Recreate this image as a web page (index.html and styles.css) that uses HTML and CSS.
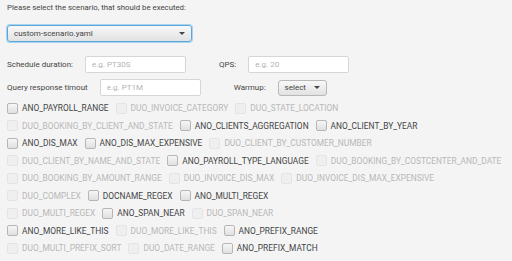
FILE: index.html
```html
<!DOCTYPE html>
<html lang="en">

<head>
    <meta charset="UTF-8">
    <title>Scenario Runner</title>
    <link rel="stylesheet" href="styles.css">
</head>

<body>
    <div class="container">
        <p class="intro">Please select the scenario, that should be executed:</p>

        <div class="combo scenario">
            <span>custom-scenario.yaml</span>
            <span class="arrow"></span>
        </div>

        <div class="form-row first">
            <label>Schedule duration:</label>
            <input type="text" placeholder="e.g. PT30S">
            <label class="lbl-right">QPS:</label>
            <input type="text" placeholder="e.g. 20">
        </div>

        <div class="form-row">
            <label>Query response timout</label>
            <input type="text" placeholder="e.g. PT1M">
            <label class="lbl-right">Warmup:</label>
            <div class="combo warmup">
                <span>select</span>
                <span class="arrow"></span>
            </div>
        </div>

        <div class="queries">
            <div class="query-row">
                <label class="query"><span class="box"></span>ANO_PAYROLL_RANGE</label>
                <label class="query disabled"><span class="box"></span>DUO_INVOICE_CATEGORY</label>
                <label class="query disabled"><span class="box"></span>DUO_STATE_LOCATION</label>
            </div>
            <div class="query-row">
                <label class="query disabled"><span class="box"></span>DUO_BOOKING_BY_CLIENT_AND_STATE</label>
                <label class="query"><span class="box"></span>ANO_CLIENTS_AGGREGATION</label>
                <label class="query"><span class="box"></span>ANO_CLIENT_BY_YEAR</label>
            </div>
            <div class="query-row">
                <label class="query"><span class="box"></span>ANO_DIS_MAX</label>
                <label class="query"><span class="box"></span>ANO_DIS_MAX_EXPENSIVE</label>
                <label class="query disabled"><span class="box"></span>DUO_CLIENT_BY_CUSTOMER_NUMBER</label>
            </div>
            <div class="query-row">
                <label class="query disabled"><span class="box"></span>DUO_CLIENT_BY_NAME_AND_STATE</label>
                <label class="query"><span class="box"></span>ANO_PAYROLL_TYPE_LANGUAGE</label>
                <label class="query disabled"><span class="box"></span>DUO_BOOKING_BY_COSTCENTER_AND_DATE</label>
            </div>
            <div class="query-row">
                <label class="query disabled"><span class="box"></span>DUO_BOOKING_BY_AMOUNT_RANGE</label>
                <label class="query disabled"><span class="box"></span>DUO_INVOICE_DIS_MAX</label>
                <label class="query disabled"><span class="box"></span>DUO_INVOICE_DIS_MAX_EXPENSIVE</label>
            </div>
            <div class="query-row">
                <label class="query disabled"><span class="box"></span>DUO_COMPLEX</label>
                <label class="query"><span class="box"></span>DOCNAME_REGEX</label>
                <label class="query"><span class="box"></span>ANO_MULTI_REGEX</label>
            </div>
            <div class="query-row">
                <label class="query disabled"><span class="box"></span>DUO_MULTI_REGEX</label>
                <label class="query"><span class="box"></span>ANO_SPAN_NEAR</label>
                <label class="query disabled"><span class="box"></span>DUO_SPAN_NEAR</label>
            </div>
            <div class="query-row">
                <label class="query"><span class="box"></span>ANO_MORE_LIKE_THIS</label>
                <label class="query disabled"><span class="box"></span>DUO_MORE_LIKE_THIS</label>
                <label class="query"><span class="box"></span>ANO_PREFIX_RANGE</label>
            </div>
            <div class="query-row">
                <label class="query disabled"><span class="box"></span>DUO_MULTI_PREFIX_SORT</label>
                <label class="query disabled"><span class="box"></span>DUO_DATE_RANGE</label>
                <label class="query"><span class="box"></span>ANO_PREFIX_MATCH</label>
            </div>
        </div>
    </div>
</body>

</html>
```

FILE: styles.css
```css
body {
    font-family: Roboto, "Liberation Sans", sans-serif;
    font-size: 8px;
    background: #f4f4f4;
    color: #444444;
    margin: 0;
}

.container {
    padding: 3px 7px;
}

.intro {
    margin: 0;
    height: 9px;
    line-height: 9px;
    font-size: 7.8px;
}

.combo {
    display: flex;
    align-items: center;
    justify-content: space-between;
    box-sizing: border-box;
    height: 17px;
    padding: 0 6px;
    border: 1px solid #b8b8b8;
    border-radius: 3px;
    background: linear-gradient(#f8f8f8, #e2e2e2);
}

.scenario {
    width: 185px;
    margin-top: 13px;
    border-color: #58a8dc;
    box-shadow: 0 0 0 1px #a9d3ef;
}

.warmup {
    width: 49px;
    height: 16px;
}

.arrow {
    width: 0;
    height: 0;
    border-left: 3px solid transparent;
    border-right: 3px solid transparent;
    border-top: 3px solid #444444;
}

.form-row {
    display: flex;
    align-items: center;
    gap: 12px;
    margin-top: 6px;
}

.form-row.first {
    margin-top: 14px;
}

.form-row label {
    white-space: nowrap;
}

.lbl-right {
    margin-left: 21px;
}

.form-row input {
    box-sizing: border-box;
    width: 101px;
    height: 17px;
    padding: 0 6px;
    border: 1px solid #d6d6d6;
    border-radius: 2px;
    background: #ffffff;
    font-family: inherit;
    font-size: 8px;
}

.form-row input::placeholder {
    color: #b4b4b4;
}

.queries {
    display: flex;
    flex-direction: column;
    gap: 5.5px;
    margin-top: 6px;
}

.query-row {
    display: flex;
    gap: 7px;
}

.query {
    display: flex;
    align-items: center;
    gap: 4px;
    height: 12px;
    font-size: 8.4px;
    white-space: nowrap;
}

.box {
    box-sizing: border-box;
    width: 11px;
    height: 11px;
    border: 1px solid #b6b6b6;
    border-radius: 2px;
    background: linear-gradient(#f6f6f6, #e0e0e0);
}

.query.disabled {
    color: #b8b8b8;
}

.query.disabled .box {
    border-color: #e4e4e4;
    background: #efefef;
}
```
